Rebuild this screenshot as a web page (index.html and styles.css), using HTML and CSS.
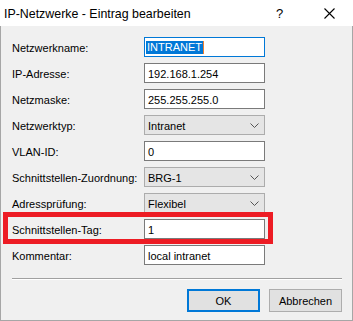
FILE: index.html
```html
<!doctype html>
<html>
<head>
<meta charset="utf-8">
<title>IP-Netzwerke - Eintrag bearbeiten</title>
<link rel="stylesheet" href="styles.css">
</head>
<body>
<div class="window">
	<div class="titlebar">
		<span class="title">IP-Netzwerke - Eintrag bearbeiten</span>
		<span class="help">?</span>
		<span class="close">
			<svg width="11" height="11" viewBox="0 0 11 11"><path d="M0.5 0.5L10.5 10.5M10.5 0.5L0.5 10.5" stroke="#000" stroke-width="1.1" fill="none"/></svg>
		</span>
	</div>
	<div class="content">
		<div class="form">
			<label>Netzwerkname:</label>
			<div class="field focus"><span class="sel">INTRANET</span><span class="caret"></span></div>

			<label>IP-Adresse:</label>
			<div class="field">192.168.1.254</div>

			<label>Netzmaske:</label>
			<div class="field">255.255.255.0</div>

			<label>Netzwerktyp:</label>
			<div class="combo"><span>Intranet</span><svg class="chev" width="9" height="5" viewBox="0 0 9 5"><path d="M0.5 0.5L4.5 4.5L8.5 0.5" stroke="#555" fill="none"/></svg></div>

			<label>VLAN-ID:</label>
			<div class="field">0</div>

			<label>Schnittstellen-Zuordnung:</label>
			<div class="combo"><span>BRG-1</span><svg class="chev" width="9" height="5" viewBox="0 0 9 5"><path d="M0.5 0.5L4.5 4.5L8.5 0.5" stroke="#555" fill="none"/></svg></div>

			<label>Adressprüfung:</label>
			<div class="combo"><span>Flexibel</span><svg class="chev" width="9" height="5" viewBox="0 0 9 5"><path d="M0.5 0.5L4.5 4.5L8.5 0.5" stroke="#555" fill="none"/></svg></div>

			<label>Schnittstellen-Tag:</label>
			<div class="field">1</div>

			<label>Kommentar:</label>
			<div class="field">local intranet</div>
		</div>
		<div class="separator"></div>
		<div class="buttons">
			<button class="btn default">OK</button>
			<button class="btn">Abbrechen</button>
		</div>
	</div>
	<div class="highlight"></div>
</div>
</body>
</html>
```

FILE: styles.css
```css
*{
	margin:0;
	padding:0;
	box-sizing:border-box;
}
body{
	background:#f0f0f0;
	overflow:hidden;
	font-family:"Liberation Sans", Arial, sans-serif;
}
.window{
	position:relative;
	width:353px;
	height:321px;
	display:flex;
	flex-direction:column;
}
.titlebar{
	height:26px;
	background:#fff;
	display:flex;
	align-items:center;
	padding-left:4px;
	flex-shrink:0;
}
.title{
	font-size:12.4px;
	color:#000;
	flex:1;
	padding-top:1px;
}
.help{
	font-size:13px;
	width:12px;
	margin-right:36px;
	padding-top:1px;
}
.close{
	width:29px;
	height:11px;
	display:flex;
}
.content{
	flex:1;
	border:1px solid #a6a6a6;
	border-top:none;
	padding:11px 11px 0 11px;
}
.form{
	display:grid;
	grid-template-columns:132px 121px;
	grid-auto-rows:20px;
	row-gap:6px;
}
label{
	font-size:11px;
	color:#000;
	display:flex;
	align-items:center;
	padding-top:2px;
}
.field, .combo{
	font-size:11px;
	display:flex;
	align-items:center;
	padding-left:3px;
	padding-top:1px;
	color:#000;
}
.field{
	background:#fff;
	border:1px solid #7a7a7a;
}
.field.focus{
	border-color:#0078d7;
	padding-left:1px;
}
.sel{
	background:#0078d7;
	color:#fff;
	padding:0 1px 0 1px;
	line-height:13px;
}
.caret{
	width:1px;
	height:13px;
	background:#f08030;
}
.combo{
	background:#e5e5e5;
	border:1px solid #acacac;
	justify-content:space-between;
	padding-right:5px;
}
.chev{
	display:block;
}
.separator{
	margin-top:13px;
	border-top:1px solid #a0a0a0;
	border-bottom:1px solid #fff;
	height:2px;
	width:330px;
}
.buttons{
	display:flex;
	justify-content:flex-end;
	gap:9px;
	margin-top:9px;
	width:330px;
}
.btn{
	width:73px;
	height:23px;
	background:#e1e1e1;
	border:1px solid #adadad;
	font-family:"Liberation Sans", Arial, sans-serif;
	font-size:11px;
	color:#000;
}
.btn.default{
	border:2px solid #0078d7;
}
.highlight{
	position:absolute;
	left:3px;
	top:212px;
	width:270px;
	height:32px;
	border:5px solid #ed1c24;
}
```
